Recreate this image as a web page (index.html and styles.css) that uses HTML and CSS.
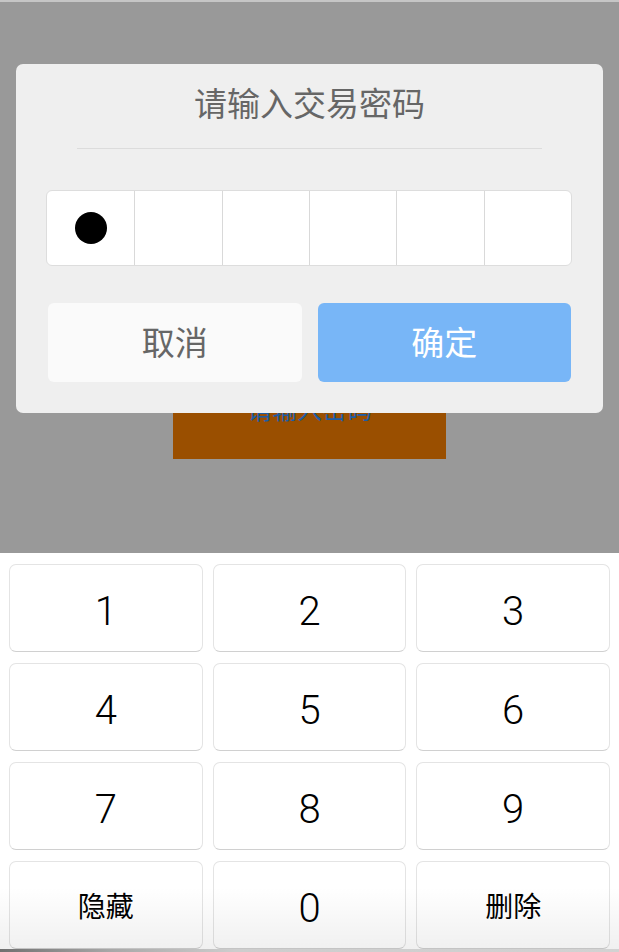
FILE: index.html
```html
<!DOCTYPE html>
<html lang="zh-CN">
<head>
<meta charset="utf-8">
<title>交易密码</title>
<link rel="stylesheet" href="styles.css">
</head>
<body>
<div class="screen">
  <div class="page">
    <div class="submit-btn">请输入密码</div>
  </div>

  <div class="dialog">
    <div class="dialog-title">请输入交易密码</div>
    <div class="dialog-divider"></div>
    <div class="pwd-box">
      <div class="pwd-cell"><span class="pwd-dot"></span></div>
      <div class="pwd-cell"></div>
      <div class="pwd-cell"></div>
      <div class="pwd-cell"></div>
      <div class="pwd-cell"></div>
      <div class="pwd-cell"></div>
    </div>
    <div class="dialog-actions">
      <button class="btn btn-cancel">取消</button>
      <button class="btn btn-ok">确定</button>
    </div>
  </div>

  <div class="keyboard">
    <button class="key key-num">1</button>
    <button class="key key-num">2</button>
    <button class="key key-num">3</button>
    <button class="key key-num">4</button>
    <button class="key key-num">5</button>
    <button class="key key-num">6</button>
    <button class="key key-num">7</button>
    <button class="key key-num">8</button>
    <button class="key key-num">9</button>
    <button class="key key-text">隐藏</button>
    <button class="key key-num">0</button>
    <button class="key key-text">删除</button>
    <div class="keyboard-fade"></div>
  </div>
  <div class="bottom-bar"></div>
</div>
</body>
</html>
```

FILE: styles.css
```css
* { box-sizing: border-box; }

html, body {
  margin: 0;
  padding: 0;
}

body {
  width: 619px;
  height: 952px;
  overflow: hidden;
  font-family: "Noto Sans CJK SC", "Noto Sans", sans-serif;
  background: #ffffff;
}

.screen {
  position: relative;
  width: 619px;
  height: 952px;
  display: flex;
  flex-direction: column;
}

.page {
  height: 553px;
  flex: none;
  background: #999999;
  border-top: 2px solid #c6c6c6;
  display: flex;
  flex-direction: column;
  align-items: center;
}

.submit-btn {
  margin-top: 357px;
  width: 273px;
  height: 100px;
  background: #9a4f00;
  color: #1d5da6;
  font-size: 25px;
  line-height: 98px;
  text-align: center;
}

.dialog {
  position: absolute;
  left: 16px;
  top: 64px;
  width: 587px;
  height: 349px;
  background: #efefef;
  border-radius: 7px;
  display: flex;
  flex-direction: column;
}

.dialog-title {
  height: 84px;
  line-height: 77px;
  text-align: center;
  font-size: 33px;
  color: #666666;
}

.dialog-divider {
  margin: 0 61px;
  height: 1px;
  background: #dcdcdc;
}

.pwd-box {
  margin: 41px 31px 0 30px;
  height: 76px;
  display: grid;
  grid-template-columns: repeat(6, 1fr);
  background: #ffffff;
  border: 1px solid #dddddd;
  border-radius: 6px;
  overflow: hidden;
}

.pwd-cell {
  display: flex;
  align-items: center;
  justify-content: center;
  border-left: 1px solid #d9d9d9;
}

.pwd-cell:first-child { border-left: none; }

.pwd-dot {
  width: 32px;
  height: 32px;
  border-radius: 50%;
  background: #000000;
}

.dialog-actions {
  margin-top: 37px;
  padding: 0 32px;
  display: grid;
  grid-template-columns: 1fr 1fr;
  column-gap: 16px;
}

.btn {
  height: 79px;
  border: none;
  border-radius: 6px;
  font-family: "Noto Sans CJK SC", "Noto Sans", sans-serif;
  font-size: 33px;
  padding: 0 0 3px 0;
}

.btn-cancel {
  background: #fafafa;
  color: #666666;
}

.btn-ok {
  background: #78b6f7;
  color: #ffffff;
}

.keyboard {
  position: relative;
  flex: 1;
  background: #ffffff;
  padding: 11px 9px 0 9px;
  display: grid;
  grid-template-columns: repeat(3, 1fr);
  grid-auto-rows: 88px;
  column-gap: 10px;
  row-gap: 11px;
}

.key {
  background: #ffffff;
  border: 1px solid #e4e4e4;
  border-bottom-color: #d0d0d0;
  border-radius: 7px;
  color: #000000;
  padding: 0;
  display: flex;
  align-items: center;
  justify-content: center;
}

.key-num {
  font-family: Roboto, "Liberation Sans", sans-serif;
  font-weight: 300;
  font-size: 40px;
  padding-top: 7px;
}

.key-text {
  font-family: "Noto Sans CJK SC", "Noto Sans", sans-serif;
  font-size: 28px;
}

.keyboard-fade {
  position: absolute;
  left: 0;
  right: 0;
  bottom: 0;
  height: 62px;
  background: linear-gradient(to bottom, rgba(0,0,0,0), rgba(0,0,0,0.06));
  pointer-events: none;
}

.bottom-bar {
  height: 3px;
  flex: none;
  background: linear-gradient(to right, #707070 0%, #a8a8a8 18%, #cdcdcd 38%, #d2d2d2 100%);
}
```
